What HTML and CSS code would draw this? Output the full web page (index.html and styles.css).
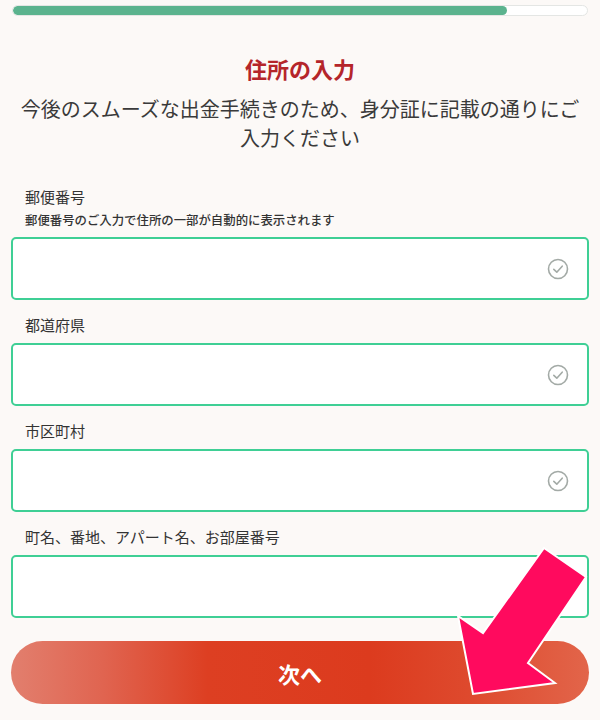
FILE: index.html
```html
<!DOCTYPE html>
<html lang="ja">
  <head>
    <meta charset="UTF-8" />
    <meta name="viewport" content="width=device-width, initial-scale=1.0" />
    <title>住所の入力</title>
    <link rel="stylesheet" href="styles.css">
  </head>
  <body>
    <div class="page">
      <!-- 進捗バー -->
      <div class="progress"><div class="progress-fill"></div></div>

      <h1 class="title">住所の入力</h1>
      <p class="lead">今後のスムーズな出金手続きのため、身分証に記載の通りにご入力ください</p>

      <form class="form">
        <div class="field first">
          <label class="label">郵便番号</label>
          <p class="hint">郵便番号のご入力で住所の一部が自動的に表示されます</p>
          <div class="input">
            <svg class="check" width="22" height="22" viewBox="0 0 22 22">
              <circle cx="11" cy="11" r="9.5" fill="none" stroke="#a3aaa6" stroke-width="1.6"/>
              <path d="M6.8 11.4 L9.8 14.2 L15.2 8.2" fill="none" stroke="#a3aaa6" stroke-width="1.6" stroke-linecap="round" stroke-linejoin="round"/>
            </svg>
          </div>
        </div>
        <div class="field">
          <label class="label">都道府県</label>
          <div class="input">
            <svg class="check" width="22" height="22" viewBox="0 0 22 22">
              <circle cx="11" cy="11" r="9.5" fill="none" stroke="#a3aaa6" stroke-width="1.6"/>
              <path d="M6.8 11.4 L9.8 14.2 L15.2 8.2" fill="none" stroke="#a3aaa6" stroke-width="1.6" stroke-linecap="round" stroke-linejoin="round"/>
            </svg>
          </div>
        </div>
        <div class="field">
          <label class="label">市区町村</label>
          <div class="input">
            <svg class="check" width="22" height="22" viewBox="0 0 22 22">
              <circle cx="11" cy="11" r="9.5" fill="none" stroke="#a3aaa6" stroke-width="1.6"/>
              <path d="M6.8 11.4 L9.8 14.2 L15.2 8.2" fill="none" stroke="#a3aaa6" stroke-width="1.6" stroke-linecap="round" stroke-linejoin="round"/>
            </svg>
          </div>
        </div>
        <div class="field">
          <label class="label">町名、番地、アパート名、お部屋番号</label>
          <div class="input"></div>
        </div>

        <button type="button" class="next">次へ</button>
      </form>

      <!-- 注目矢印 -->
      <svg class="arrow" width="600" height="720" viewBox="0 0 600 720">
        <polygon points="544,548 586,577 528,663 555,683 473,694 458,616 483,633" fill="#ff0a5e" stroke="#fff" stroke-width="2" stroke-linejoin="miter"/>
      </svg>
    </div>
  </body>
</html>
```

FILE: styles.css
```css
body {
  margin: 0;
  padding: 0;
  background-color: #fcf9f7;
  font-family: "Noto Sans CJK JP", "Noto Sans", sans-serif;
  color: #333;
}
.page {
  position: relative;
  width: 600px;
  height: 720px;
  overflow: hidden;
  padding: 0 11px;
  box-sizing: border-box;
}
.progress {
  margin: 5px 1px 0;
  height: 11px;
  background-color: #fff;
  border: 1px solid #e4e6e4;
  border-radius: 6px;
  box-sizing: border-box;
  overflow: hidden;
}
.progress-fill {
  width: 86%;
  height: 100%;
  background-color: #5bb38e;
  border-radius: 6px;
}
.title {
  margin: 40px 0 0;
  font-size: 22px;
  line-height: 24px;
  font-weight: 700;
  color: #b5252a;
  text-align: center;
}
.lead {
  margin: 14px 0 0;
  font-size: 20px;
  line-height: 29px;
  text-align: center;
  color: #3a3a3a;
}
.form {
  margin-top: 33px;
}
.field {
  margin-top: 13px;
}
.field.first {
  margin-top: 0;
}
.label {
  display: block;
  padding-left: 14px;
  font-size: 15px;
  line-height: 24px;
  color: #333;
}
.hint {
  margin: 2px 0 0;
  padding-left: 14px;
  font-size: 12.4px;
  line-height: 18px;
  font-weight: 500;
  color: #333;
}
.input {
  margin-top: 6px;
  height: 63px;
  background-color: #fff;
  border: 2px solid #3fcf95;
  border-radius: 5px;
  box-sizing: border-box;
  display: flex;
  align-items: center;
  justify-content: flex-end;
  padding-right: 18px;
}
.first .input {
  margin-top: 8px;
}
.next {
  display: block;
  width: 100%;
  height: 63px;
  margin-top: 23px;
  border: none;
  border-radius: 32px;
  background: linear-gradient(90deg, #e27f6e 0%, #e06450 16%, #dd3f22 34%, #dc3b1e 62%, #de4a2e 80%, #e2654a 100%);
  color: #fff;
  font-family: inherit;
  font-size: 22px;
  font-weight: 700;
  cursor: pointer;
}
.arrow {
  position: absolute;
  left: 0;
  top: 0;
  pointer-events: none;
}
```
